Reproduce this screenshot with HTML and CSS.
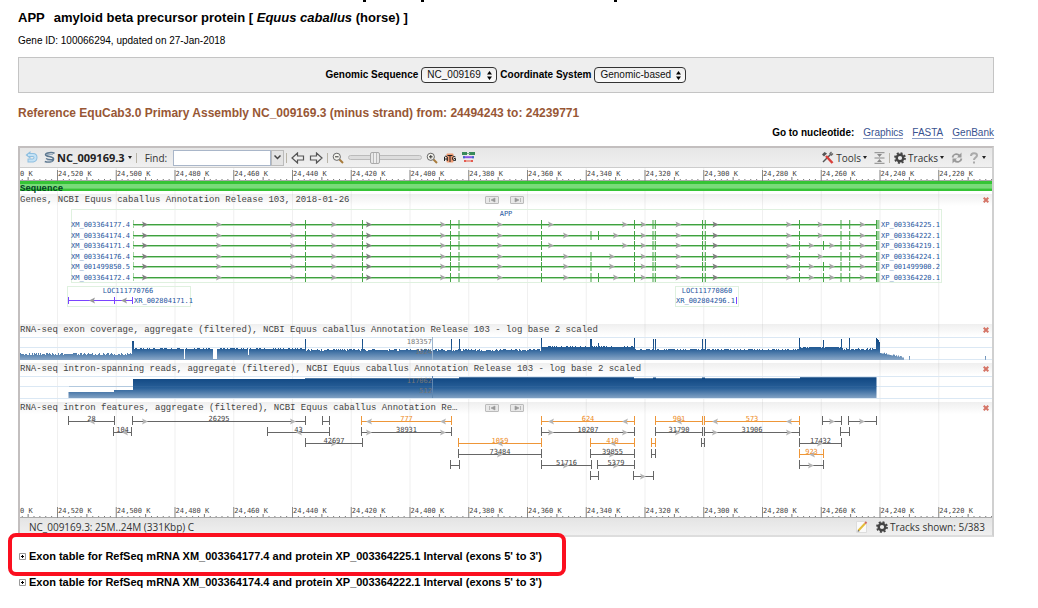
FILE: index.html
```html
<!DOCTYPE html>
<html lang="en">
<head>
<meta charset="utf-8">
<title>APP amyloid beta precursor protein</title>
<link rel="stylesheet" href="styles.css">
</head>
<body>
<svg class="cutoff" width="260" height="3" aria-hidden="true"><path d="M1 0h3v2h-3zM59 0h3v2h-3zM252 0h3v2h-3z"/></svg>
<main class="page">
  <h1 class="title"><span class="symbol">APP</span>amyloid beta precursor protein [ <i>Equus caballus</i> (horse) ]</h1>
  <p class="gene-id">Gene ID: 100066294, updated on 27-Jan-2018</p>

  <form class="options">
    <label for="seq">Genomic Sequence</label>
    <span class="picker picker-seq">
      <select id="seq"><option>NC_009169</option></select>
      <svg class="picker-arrows" width="5" height="9" viewBox="0 0 5 9"><path d="M0 3.5 2.5 0 5 3.5zM0 5.5h5L2.5 9z"/></svg>
    </span>
    <label for="coord">Coordinate System</label>
    <span class="picker picker-coord">
      <select id="coord"><option>Genomic-based</option></select>
      <svg class="picker-arrows" width="5" height="9" viewBox="0 0 5 9"><path d="M0 3.5 2.5 0 5 3.5zM0 5.5h5L2.5 9z"/></svg>
    </span>
  </form>

  <h2 class="assembly">Reference EquCab3.0 Primary Assembly NC_009169.3 (minus strand) from: 24494243 to: 24239771</h2>

  <nav class="goto"><b>Go to nucleotide:</b><a href="#graphics">Graphics</a><a href="#fasta">FASTA</a><a href="#genbank">GenBank</a></nav>

  <section class="viewer" aria-label="Sequence viewer">
    <div class="toolbar">
      <button class="tool" aria-label="Back"><svg width="13" height="13" viewBox="0 0 13 13" fill="none"><path d="M4 4h4Q10.500 4 10.500 6.500T8 9.500H2.500" stroke="#8fbfe0" stroke-width="4"/><path d="M5.500 0v8L.5 4z" fill="#8fbfe0"/><path d="M3 4h5Q10.500 4 10.500 6.500T8 9.500H3.500" stroke="#c4e2f5" stroke-width="2"/></svg></button>
      <button class="tool sequence-menu"><svg width="11" height="13" viewBox="0 0 11 13" fill="none" stroke="#5d7890" stroke-width="1.500"><path d="M10.500 2.200C8 1 2 1.500 1.500 3.500S9 5.500 9.500 7.500 4 9 2 7.500M9.500 7.500C10 10.500 5 12 .8 10.500"/><path d="M3 3.500h6M3 10h5" stroke="#9fb2c3" stroke-width="1"/></svg><b>NC_009169.3</b><span class="caret"></span></button>
      <span class="sep"></span>
      <label class="find-label" for="find">Find:</label>
      <span class="combo"><input id="find" type="text"><button aria-label="Show searches"><svg width="7" height="5" viewBox="0 0 7 5"><path d="M.5.500 3.500 3.500 6.500.500" fill="none" stroke="#444" stroke-width="1.500"/></svg></button></span>
      <span class="sep sep-tight"></span>
      <button class="tool" aria-label="Pan left"><svg width="14" height="12" viewBox="0 0 14 12"><path d="M1 6 6.500 1v3H12.500v4H6.500v3z" fill="#eee" stroke="#555" stroke-width="1.200"/></svg></button>
      <button class="tool" aria-label="Pan right"><svg width="14" height="12" viewBox="0 0 14 12"><path d="M13 6 7.500 1v3H1.500v4H7.500v3z" fill="#eee" stroke="#555" stroke-width="1.200"/></svg></button>
      <span class="sep sep-tight"></span>
      <button class="tool" aria-label="Zoom out"><svg width="12" height="12" viewBox="0 0 12 12"><path d="m7.500 7.500 3.500 3.500" stroke="#a87b3b" stroke-width="2"/><circle cx="4.800" cy="4.800" r="3.600" fill="#f5f5ef" stroke="#666"/><path d="M3 4.800h3.600" stroke="#333"/></svg></button>
      <input class="zoom" type="range" min="0" max="100" value="33" aria-label="Zoom">
      <button class="tool" aria-label="Zoom in"><svg width="12" height="12" viewBox="0 0 12 12"><path d="m7.500 7.500 3.500 3.500" stroke="#a87b3b" stroke-width="2"/><circle cx="4.800" cy="4.800" r="3.600" fill="#f5f5ef" stroke="#666"/><path d="M3 4.800h3.600M4.800 3v3.600" stroke="#333"/></svg></button>
      <button class="tool atg" aria-label="Zoom to sequence"><svg width="12" height="12" viewBox="0 0 12 12"><rect x="2.500" y="1.500" width="7" height="9" rx="1" fill="#ee9a72"/><path d="M.5 9V5Q2 2.800 3.300 5v4M.5 7h3M3.500 3.500h5M6 3.500V10M11.500 5Q9 3 8.500 6t3 2.500V6.500H10" fill="none" stroke="#222" stroke-width="1"/></svg></button>
      <button class="tool" aria-label="Flip strands"><svg width="13" height="11" viewBox="0 0 13 11"><path d="M0 0h5v3H0zM7 0h6v3H7z" fill="#38895a"/><path d="M5 1.500h3" stroke="#7ab38e"/><path d="M1 5.200h11" stroke="#8a55e8" stroke-width="2"/><path d="M1 5.200h2M10 5.200h2" stroke="#416bc8" stroke-width="2"/><path d="M2 9h9" stroke="#e67667" stroke-width="1.300"/><path d="M2 8h2v2H2zM9 8h2v2H9z" fill="#e45b50"/></svg></button>
      <span class="spacer"></span>
      <button class="tool menu"><svg width="13" height="13" viewBox="0 0 13 13" fill="none"><path d="M10.500 2.500 2 11" stroke="#555" stroke-width="1.500"/><path d="M12 2.500 10.500 4 9 2.500 10.500 1" stroke="#666" stroke-width="1.300"/><path d="m5 5 6.500 7" stroke="#d9403b" stroke-width="2.500"/><path d="M1 3.500 3.500 1l2.500 1.500L3 5.500z" fill="#555"/></svg>Tools<span class="caret"></span></button>
      <button class="tool collapse" aria-label="Collapse tracks"><svg width="11" height="12" viewBox="0 0 11 12"><path d="M.5.700h10M.5 6h10M.5 11.300h10" stroke="#888"/><path d="M3 2h5L5.500 5zM3 10h5L5.500 7z" fill="#888"/></svg></button>
      <span class="sep sep-tight"></span>
      <button class="tool menu"><svg width="12" height="12" viewBox="0 0 12 12" fill="none" stroke="#444"><circle cx="6" cy="6" r="3.300" stroke-width="2.400"/><circle cx="6" cy="6" r="5" stroke-width="1.800" stroke-dasharray="2 1.927"/></svg>Tracks<span class="caret"></span></button>
      <button class="tool refresh" aria-label="Reload"><svg width="12" height="12" viewBox="0 0 12 12" fill="none" stroke="#999" stroke-width="1.800"><path d="M1.500 5.500C2 2 6 1 8.500 3.500M10.500 6.500C10 10 6 11 3.500 8.500"/><path d="M10.500.500v5H6zM1.500 11.500v-5H6z" fill="#999" stroke="none"/></svg></button>
      <button class="tool menu help" aria-label="Help"><svg width="8" height="12" viewBox="0 0 8 12" fill="none" stroke="#aaa" stroke-width="2"><path d="M1 4Q1 1.200 4 1.200T7 3.500C7 5.500 4 5.500 4 8M4 9.500v2"/></svg><span class="caret"></span></button>
    </div>

    <div class="tracks">
      <svg class="grid" viewBox="20 168 972 350" preserveAspectRatio="none" id="grid" aria-hidden="true"></svg>
      <svg class="panel" viewBox="20 168 972 26" id="ruler-top"></svg>

      <header class="track-head"><span class="track-name">Genes, NCBI Equus caballus Annotation Release 103, 2018-01-26</span><span class="steps"><button aria-label="Previous gene"><svg width="9" height="6" viewBox="0 0 9 6"><path d="M1.500 1v4M7 1 3 3l4 2z" fill="#999" stroke="#999" stroke-width=".6"/></svg></button><button aria-label="Next gene"><svg width="9" height="6" viewBox="0 0 9 6"><path d="M7.500 1v4M2 1l4 2-4 2z" fill="#999" stroke="#999" stroke-width=".6"/></svg></button></span><button class="close" aria-label="Hide track"><svg width="6" height="6" viewBox="0 0 6 6"><path d="m.7.700 4.600 4.600M5.300.700.700 5.300"/></svg></button></header>
      <svg class="panel" viewBox="20 206 972 118" id="genes"></svg>

      <header class="track-head wide"><span class="track-name">RNA-seq exon coverage, aggregate (filtered), NCBI Equus caballus Annotation Release 103 - log base 2 scaled</span><button class="close" aria-label="Hide track"><svg width="6" height="6" viewBox="0 0 6 6"><path d="m.7.700 4.600 4.600M5.300.700.700 5.300"/></svg></button></header>
      <svg class="panel" viewBox="20 336 972 27" id="coverage"></svg>

      <header class="track-head wide"><span class="track-name">RNA-seq intron-spanning reads, aggregate (filtered), NCBI Equus caballus Annotation Release 103 - log base 2 scaled</span><button class="close" aria-label="Hide track"><svg width="6" height="6" viewBox="0 0 6 6"><path d="m.7.700 4.600 4.600M5.300.700.700 5.300"/></svg></button></header>
      <svg class="panel" viewBox="20 375 972 27" id="reads"></svg>

      <header class="track-head"><span class="track-name">RNA-seq intron features, aggregate (filtered), NCBI Equus caballus Annotation Re…</span><span class="steps"><button aria-label="Previous feature"><svg width="9" height="6" viewBox="0 0 9 6"><path d="M1.500 1v4M7 1 3 3l4 2z" fill="#999" stroke="#999" stroke-width=".6"/></svg></button><button aria-label="Next feature"><svg width="9" height="6" viewBox="0 0 9 6"><path d="M7.500 1v4M2 1l4 2-4 2z" fill="#999" stroke="#999" stroke-width=".6"/></svg></button></span><button class="close" aria-label="Hide track"><svg width="6" height="6" viewBox="0 0 6 6"><path d="m.7.700 4.600 4.600M5.300.700.700 5.300"/></svg></button></header>
      <svg class="panel" viewBox="20 414 972 104" id="introns"></svg>
    </div>

    <footer class="status">
      <span>NC_009169.3: 25M..24M (331Kbp) C</span>
      <span class="spacer"></span>
      <button class="tool" aria-label="Edit"><svg width="12" height="12" viewBox="0 0 12 12"><path d="M.5.500h10v11H.5z" fill="#fafafa" stroke="#ddd"/><path d="M2.500 9.500 9 2.500" stroke="#e3bd3b" stroke-width="2"/><path d="m9 2.500 1.500-1.500" stroke="#d46a5a" stroke-width="2"/><path d="m1.500 10.700.500-2 1.500 1.500z" fill="#555"/></svg></button>
      <button class="tool menu shown"><svg width="12" height="12" viewBox="0 0 12 12" fill="none" stroke="#444"><circle cx="6" cy="6" r="3.300" stroke-width="2.400"/><circle cx="6" cy="6" r="5" stroke-width="1.800" stroke-dasharray="2 1.927"/></svg>Tracks shown: 5/383</button>
    </footer>
  </section>

  <div class="exon marked"><button aria-expanded="false"><svg width="7" height="7" viewBox="0 0 7 7"><path d="M.5.500h6v6h-6z" fill="#fff" stroke="#999"/><path d="M2 3.500h3M3.500 2v3" stroke="#000"/></svg>Exon table for RefSeq mRNA XM_003364177.4 and protein XP_003364225.1 Interval (exons 5' to 3')</button></div>
  <div class="exon"><button aria-expanded="false"><svg width="7" height="7" viewBox="0 0 7 7"><path d="M.5.500h6v6h-6z" fill="#fff" stroke="#999"/><path d="M2 3.500h3M3.500 2v3" stroke="#000"/></svg>Exon table for RefSeq mRNA XM_003364174.4 and protein XP_003364222.1 Interval (exons 5' to 3')</button></div>
</main>
<script src="tracks.js"></script>
</body>
</html>
```
FILE: styles.css
```css
*, *::after { box-sizing: border-box; }
body {
  margin: 0;
  background: #fff;
  color: #000;
  font: 10px/12px "Liberation Sans", Arial, sans-serif;
}
button { margin: 0; padding: 0; border: 0; background: none; color: inherit; font: inherit; }
svg { display: block; flex: none; }
.cutoff { margin-left: 362px; }
.page { padding: 0 44px 0 18px; }
.title { margin: 7px 0 0; font-size: 13px; line-height: 16px; }
.symbol { margin-right: 9px; }
.gene-id { margin: 9px 0 10px; }

.options {
  display: flex;
  align-items: center;
  justify-content: center;
  gap: 3px;
  padding: 9px;
  border: 1px solid #c4c4c4;
  background: #eee;
  font-weight: bold;
}
.picker { position: relative; }
.picker select {
  display: block;
  width: 100%;
  height: 16px;
  padding: 0 5px;
  border: 1px solid #333;
  border-radius: 4px;
  background: linear-gradient(#eee, #fafafa);
  color: #111;
  font: 10px/12px "Liberation Sans", Arial, sans-serif;
  appearance: none;
}
.picker-seq { width: 76px; }
.picker-coord { width: 92px; }
.picker-arrows { position: absolute; top: 4px; right: 5px; pointer-events: none; }

.assembly { margin: 12px 0 6px; color: #985735; font-size: 12px; line-height: 16px; }
.goto { display: flex; justify-content: flex-end; gap: 9px; margin-bottom: 7px; line-height: 11px; }
.goto a { border-bottom: 1px solid #8a9cc4; color: #385290; text-decoration: none; }

.viewer {
  border: 2px solid #c3bfbf;
  border-right-color: #d0d0d0;
  border-bottom-color: #ddd;
  color: #333;
  font-family: "Open Sans", "Noto Sans", sans-serif;
}
.toolbar {
  display: flex;
  align-items: center;
  height: 20px;
  padding: 0 4px 0 5px;
  border-bottom: 1px solid #ccc;
  background: linear-gradient(#e6e6e6, #f0f0f0);
}
.tool { display: flex; align-items: center; gap: 3px; margin-right: 4px; }
.sequence-menu { gap: 2px; margin-left: 2px; color: #222; font-size: 11px; }
.caret { margin-left: 1px; border: 2px solid transparent; border-top: 3px solid #222; border-bottom: 0; }
.sep { width: 1px; height: 10px; margin-right: 8px; background: #b8b4a8; }
.sep-tight { margin-right: 4px; }
.find-label { margin-right: 6px; }
.combo { display: flex; margin-right: 2px; }
.combo input { width: 98px; height: 16px; padding: 0 3px; border: 1px solid #a9b6c9; background: #fff; font: inherit; }
.combo button { display: grid; place-items: center; width: 13px; height: 16px; border: 1px solid #bbb; background: #e4e4e4; }
.zoom { width: 74px; height: 12px; margin: 0 4px 0 0; background: none; appearance: none; }
.zoom::-webkit-slider-runnable-track { height: 5px; border: 1px solid #bbb; border-radius: 3px; background: #ddd; }
.zoom::-webkit-slider-thumb {
  width: 10px;
  height: 12px;
  margin-top: -4px;
  border: 1px solid #aaa;
  border-radius: 2px;
  background: linear-gradient(90deg, #e8e8e8 2px, #bbb 2px, #bbb 3px, #eee 3px, #eee 5px, #bbb 5px, #bbb 6px, #e8e8e8 6px);
  appearance: none;
}
.atg { margin: 0 6px 0 2px; }
.spacer { flex: 1; }
.menu { gap: 2px; margin-right: 7px; }
.menu .caret { margin-left: 0; }
.refresh { margin-right: 7px; }
.help { gap: 4px; margin-right: 2px; }

.tracks { position: relative; }
.grid { position: absolute; inset: 0; width: 100%; height: 100%; }
.panel { position: relative; width: 100%; height: auto; overflow: hidden; }
.track-head {
  position: relative;
  display: grid;
  grid-template-columns: 1fr auto 1fr;
  align-items: center;
  height: 12px;
  padding-right: 3px;
  background: linear-gradient(#8882, #8880);
}
.track-head.wide { grid-template-columns: 1fr auto; }
.track-name { overflow: hidden; color: #444; font: 9px/12px "Liberation Mono", monospace; white-space: nowrap; }
.steps { display: flex; gap: 11px; }
.steps button { display: grid; place-items: center; width: 14px; height: 8px; border: 1px solid #bbb; border-radius: 1px; background: #e8e8e8; }
.close { justify-self: end; }
.close path { fill: none; stroke: #d57466; stroke-width: 2; }

.status {
  display: flex;
  align-items: center;
  height: 17px;
  padding: 0 7px 0 9px;
  background: linear-gradient(#e4e4e4, #f0f0f0);
}
.status .tool { margin-right: 8px; }
.status .shown { margin-right: 0; }

.exon { position: relative; padding: 7px 0; font-size: 11px; font-weight: bold; }
.exon button { display: flex; align-items: center; gap: 3px; padding-left: 1px; text-align: left; }
.exon.marked { margin-top: 6px; }
.marked::after {
  content: "";
  position: absolute;
  inset: -10px auto -7px -10px;
  width: 558px;
  border: 4px solid #fb0f1f;
  border-radius: 8px;
  pointer-events: none;
}

.tiny { fill: #444; font: 7px "DejaVu Sans Mono", monospace; }
.tiny.link { fill: #1f56a0; }
.tiny.orange { fill: #ee8a22; }
.tiny.scale { fill: #777; }
.seq-name { fill: #042; font: bold 9px "Liberation Mono", monospace; }
```
FILE: tracks.js
```js
const NS = "http://www.w3.org/2000/svg";
const $ = (id) => document.getElementById(id);

function add(parent, tag, attrs, text) {
  const el = document.createElementNS(NS, tag);
  for (const key in attrs) el.setAttribute(key, attrs[key]);
  if (text) el.textContent = text;
  parent.appendChild(el);
  return el;
}
const rect = (p, x, y, width, height, fill) => add(p, "rect", { x, y, width, height, fill });
const label = (p, x, y, text, cls = "", anchor = "start") =>
  add(p, "text", { x, y, class: "tiny " + cls, "text-anchor": anchor }, text);
function arrow(p, x, y, dir, fill = "#999") {
  const d = dir > 0 ? `M${x - 3} ${y - 3}l6 3-6 3 1.200-3z` : `M${x + 3} ${y - 3}l-6 3 6 3-1.200-3z`;
  add(p, "path", { d, fill });
}

const FIRST = 57, STEP = 58.75;

for (let n = 0; n < 16; n++) rect($("grid"), FIRST + n * STEP, 168, 1, 350, "#f0f0f0");

function ruler(p, y) {
  rect(p, 20, y + 12, 972, 1, "#aaa");
  label(p, 20, y + 8, "0 K");
  for (let n = -1; n < 16; n++) {
    const x = FIRST + n * STEP;
    if (n >= 0) {
      rect(p, x, y + 2, 1, 11, "#888");
      label(p, x + 1, y + 8, `24,${520 - n * 20} K`);
    }
    for (let i = 1; i < 10; i++) {
      const h = i === 5 ? 3 : 1;
      rect(p, x + i * STEP / 10, y + 12 - h, 1, h, "#777");
    }
  }
}

const rulerTop = $("ruler-top");
ruler(rulerTop, 168);
rect(rulerTop, 20, 181, 972, 10, "#35c435");
rect(rulerTop, 20, 184, 972, 4, "#79db79");
rect(rulerTop, 20, 188, 972, 1, "#5fd05f");
add(rulerTop, "text", { x: 20, y: 191, class: "seq-name" }, "Sequence");

/* Genes */
const genes = $("genes");
const frame = (x, y, width, height) =>
  add(genes, "rect", { x, y, width, height, fill: "none", stroke: "#dff1df" });
frame(71.5, 209.5, 870, 73);
frame(67.5, 286.5, 123, 20);
frame(675.5, 286.5, 63, 20);
label(genes, 506, 216, "APP", "link", "middle");

const COMMON_EXONS = [305, 362, 450, 458.500, 541, 634, 652.500, 654.800, 702, 704.800, 799, 840.500, 849.200];
const COMMON_ARROWS = [219, 293, 334, 443, 500, 643.500, 678.500, 789, 862.500];
const MODELS = [
  [224, "XM_003364177.4", "XP_003364225.1", [], [551, 625, 820.500]],
  [235, "XM_003364174.4", "XP_003364222.1", [590.500, 598], [566, 616, 820.500]],
  [245, "XM_003364171.4", "XP_003364219.1", [823], [551, 625, 811.500, 832]],
  [256, "XM_003364176.4", "XP_003364224.1", [590.500], [566, 612, 820.500]],
  [266, "XM_001499850.5", "XP_001499900.2", [590.500, 823], [566, 612, 811.500, 832]],
  [277, "XM_003364172.4", "XP_003364220.1", [590.500, 598, 823], [566, 616, 811.500, 832]],
];
for (const [y, mrna, protein, exons, arrows] of MODELS) {
  rect(genes, 133, y - 4, 1, 8, "#a5d5a5");
  rect(genes, 133, y, 744, 1, "#3fa03f");
  rect(genes, 133, y + 1, 744, 1, "#a9dba9");
  for (const x of [...COMMON_EXONS, ...exons]) rect(genes, x, y - 4, 1, 9, "#46a546");
  rect(genes, 876, y - 4, 1.500, 9, "#46a546");
  rect(genes, 877.500, y - 4, 2, 9, "#98cf98");
  for (const x of [...COMMON_ARROWS, ...arrows]) arrow(genes, x, y + .5, 1, "#a5a5a5");
  for (const x of [145, 369, 715.500]) arrow(genes, x, y + .5, 1, "#808080");
  label(genes, 130, y + 3, mrna, "link", "end");
  label(genes, 881, y + 3, protein, "link");
}
label(genes, 128, 293, "LOC111770766", "link", "middle");
rect(genes, 69, 300, 64, 1, "#7a44ff");
for (const x of [68, 114, 132]) rect(genes, x, 297, 1, 7, "#7a44ff");
arrow(genes, 92, 300.500, -1);
arrow(genes, 124, 300.500, -1);
label(genes, 134, 303, "XR_002804171.1", "link");
label(genes, 707, 293, "LOC111770860", "link", "middle");
label(genes, 735, 303, "XR_002804296.1", "link", "end");
rect(genes, 736, 297, 1, 7, "#7a44ff");

/* Histograms share one vertical blue ramp */
function ramp(p, id, y1, y2) {
  const g = add(add(p, "defs", {}), "linearGradient",
    { id, gradientUnits: "userSpaceOnUse", x1: 0, x2: 0, y1, y2 });
  add(g, "stop", { offset: 0, "stop-color": "#0f4681" });
  add(g, "stop", { offset: .5, "stop-color": "#285f98" });
  add(g, "stop", { offset: 1, "stop-color": "#8aa8c8" });
  return `url(#${id})`;
}

const coverage = $("coverage");
const coverFill = ramp(coverage, "cover-ramp", 338, 360);
for (const y of [337, 347, 359]) rect(coverage, 20, y, 972, 1, "#dbe8f4");
const SPIKES = { 132: 341, 133: 341, 305: 339, 362: 339, 451: 339, 459: 339, 541: 338, 590: 339, 591: 339,
  598: 343, 634: 338, 653: 339, 655: 339, 702: 339, 705: 339, 799: 338, 823: 340, 841: 339, 849: 338,
  876: 338, 877: 339, 878: 340, 879: 342 };
let seed = 7;
function noise() {
  seed = (seed * 48271) % 2147483647;
  return seed / 2147483647;
}
function coverTop(x) {
  const r = noise();
  if (SPIKES[x]) return SPIKES[x];
  if (x === 184 || (x > 212 && x < 217)) return 359;
  if (x === 248) return 355;
  if (x < 133) return 353 + Math.round(r * 2.400);
  if (x < 305) return 348 + Math.round(r * 1.500);
  if (x < 541) return 349 + Math.round(r * 1.800);
  if (x < 634) return 346 + Math.round(r * 1.600);
  if (x < 799) return 349 + Math.round(r * 1.300);
  if (x < 841) return 347 + Math.round(r * .6);
  if (x < 876) return 348 + Math.round(r * 1.800);
  if (x < 904) return 352 + (x - 880) / 5 + Math.round(r * 1.500);
  return x === 909 || x === 985 ? 356 : 360;
}
let outline = "M20 360";
for (let x = 20; x < 992; x++) outline += `V${coverTop(x)}H${x + 1}`;
add(coverage, "path", { d: outline + "V360z", fill: coverFill });
rect(coverage, 432, 337, 1, 23, "#9db4cc");
label(coverage, 432, 344, "183357", "scale", "end");
label(coverage, 432, 354, "1024", "scale", "end");

const reads = $("reads");
const readFill = ramp(reads, "read-ramp", 377, 399);
for (const y of [376, 386, 398]) rect(reads, 20, y, 972, 1, "#dbe8f4");
add(reads, "path", { fill: readFill,
  d: "M68.500 398V392H114V390H133V379H305V378.300H459V377.300H634V378.300H653V377.500H656V378.300H702V377.500H705V378.300H800V377.300H876.500V398z" });
rect(reads, 69, 386, 808, 1, "#4473a544");
rect(reads, 432, 376, 1, 22, "#5f87b0");
label(reads, 432, 383, "117062", "scale", "end");
label(reads, 432, 393, "512", "scale", "end");

/* Intron features: row, start, end, label, arrow positions, direction, orange */
const introns = $("introns");
const FEATURES = [
  [0, 69, 114, "28", [92], -1], [0, 133, 305, "26295", [145, 293], 1], [0, 323, 329, "", [], 1],
  [0, 362, 451, "777", [369, 443], -1, 1], [0, 542, 634, "624", [551, 625], -1, 1],
  [0, 656, 702, "901", [679], -1, 1], [0, 705, 799, "573", [715, 789], -1, 1],
  [0, 823, 841, "", [832], 1], [0, 849, 876, "", [862], 1],
  [1, 114, 131, "104", [125], -1], [1, 268, 329, "43", [299], -1], [1, 362, 451, "38931", [369, 443], 1],
  [1, 542, 634, "10207", [551, 625], 1], [1, 656, 702, "31790", [678], 1],
  [1, 705, 799, "31906", [715, 789], 1], [1, 841, 849, "", [], 1],
  [2, 306, 362, "42697", [334], 1], [2, 459, 541, "1059", [500], -1, 1], [2, 591, 634, "410", [613], -1, 1],
  [2, 652, 655, "", [], 1, 1], [2, 702, 704, "", [], 1], [2, 800, 841, "17432", [820], 1],
  [3, 459, 541, "73484", [500], 1], [3, 591, 634, "39855", [612], 1], [3, 652, 655, "", [], 1],
  [3, 800, 823, "923", [812], -1, 1],
  [4, 451, 459, "", [], 1], [4, 542, 591, "51716", [566], 1], [4, 598, 634, "5379", [616], 1],
  [4, 800, 823, "", [811], 1],
  [5, 591, 598, "", [], 1], [5, 634, 653, "", [643], 1],
];
for (const [row, a, b, text, arrows, dir, orange] of FEATURES) {
  const y = 421 + row * 11;
  const color = orange ? "#ee9638" : "#666";
  rect(introns, a, y, b - a, 1, color);
  rect(introns, a - 1, y - 5, 1, 9, color);
  rect(introns, b, y - 5, 1, 9, color);
  for (const x of arrows) arrow(introns, x, y + .5, dir, "#b5b5b5");
  if (text) label(introns, (a + b) / 2, y, text, orange ? "orange" : "", "middle");
}
ruler(introns, 505);
```
